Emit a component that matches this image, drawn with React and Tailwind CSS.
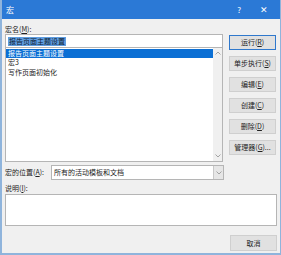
import React from "react";

const F = { fontFamily: '"Noto Sans CJK SC", "Noto Sans", sans-serif' };

function Btn({ children, def, className = "" }) {
  return (
    <div
      className={
        "flex items-center justify-center w-[47px] h-[15px] text-[7px] text-[#222] bg-[#e1e1e1] border " +
        (def ? "border-[#2f78cc]" : "border-[#cfcfcf]") +
        " " +
        className
      }
    >
      {children}
    </div>
  );
}

function Chevron({ up }) {
  return (
    <svg width="6" height="4" viewBox="0 0 6 4">
      <path
        d={up ? "M0.5 3.5 L3 1 L5.5 3.5" : "M0.5 0.5 L3 3 L5.5 0.5"}
        fill="none"
        stroke="#9a9a9a"
        strokeWidth="0.9"
      />
    </svg>
  );
}

export default function App() {
  return (
    <div
      style={F}
      className="w-[281px] h-[255px] bg-[#f0f0f0] border-l-[2px] border-r-[1px] border-b-[2px] border-[#8fb4dc] flex flex-col overflow-hidden"
    >
      <div className="h-[19px] bg-[#2b79d6] flex items-center justify-between pl-[4px] pr-[12px] text-white text-[8px] shrink-0">
        <span>宏</span>
        <div className="flex items-center gap-[19px] text-[8px]">
          <span>?</span>
          <span className="text-[9px]">✕</span>
        </div>
      </div>
      <div className="flex flex-col pl-[3px] pr-[3px]">
        <div className="h-[15px] flex items-end text-[7px] text-[#222] leading-none pb-[1px]">
          宏名(<span className="underline">M</span>):
        </div>
        <div className="flex">
          <div className="w-[218px] flex flex-col">
            <div className="h-[14px] bg-white border border-[#b5b5b5] flex items-center pl-[2px]">
              <span className="bg-[#5f9de0] text-[#0e1c30] text-[7px] leading-[9px] px-[1px]">报告页面主题设置</span>
            </div>
            <div className="h-[114px] bg-white border border-[#b5b5b5] border-t-0 flex">
              <div className="flex-1 flex flex-col pt-[1px] text-[7px] text-[#222] leading-[9.5px]">
                <div className="bg-[#0b6fd4] text-white pl-[2px] h-[9px] leading-[9px]">报告页面主题设置</div>
                <div className="pl-[2px]">宏3</div>
                <div className="pl-[2px]">写作页面初始化</div>
              </div>
              <div className="w-[9px] bg-[#f0f0f0] flex flex-col justify-between items-center py-[3px]">
                <Chevron up />
                <Chevron />
              </div>
            </div>
          </div>
          <div className="flex flex-col gap-[6px] ml-[6px] pt-[1px]">
            <Btn def>运行(<span className="underline">R</span>)</Btn>
            <Btn>单步执行(<span className="underline">S</span>)</Btn>
            <Btn>编辑(<span className="underline">E</span>)</Btn>
            <Btn>创建(<span className="underline">C</span>)</Btn>
            <Btn>删除(<span className="underline">D</span>)</Btn>
            <Btn>管理器(<span className="underline">G</span>)...</Btn>
          </div>
        </div>
        <div className="flex items-center mt-[3px] h-[15px]">
          <div className="w-[46px] text-[7px] text-[#222]">
            宏的位置(<span className="underline">A</span>):
          </div>
          <div className="w-[173px] h-[15px] bg-white border border-[#b5b5b5] flex items-center">
            <span className="flex-1 pl-[2px] text-[7px] text-[#222]">所有的活动模板和文档</span>
            <div className="w-[10px] h-full bg-[#e6e6e6] border-l border-[#c8c8c8] flex items-center justify-center">
              <Chevron />
            </div>
          </div>
        </div>
        <div className="h-[14px] flex items-end text-[7px] text-[#222] pb-[1px]">
          说明(<span className="underline">I</span>):
        </div>
        <div className="w-[272px] h-[32px] bg-white border border-[#b5b5b5]"></div>
        <div className="flex justify-end mt-[9px]">
          <Btn className="w-[47px] h-[16px]">取消</Btn>
        </div>
      </div>
    </div>
  );
}
